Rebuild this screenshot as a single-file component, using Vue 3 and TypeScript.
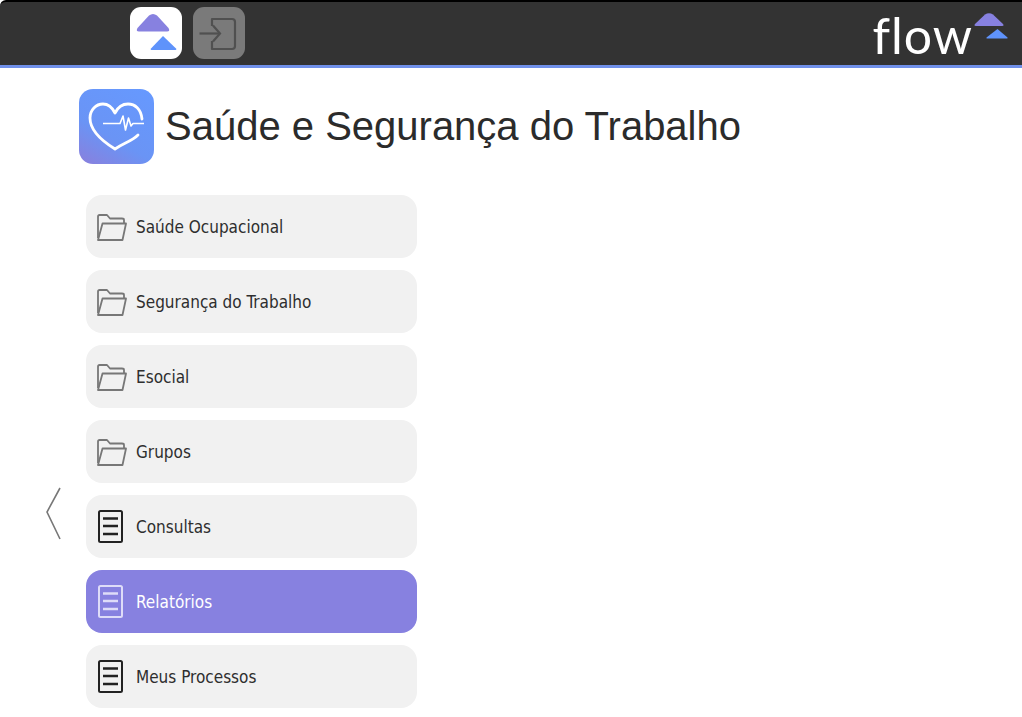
<template>
  <div class="page">
    <header class="topbar">
      <div class="tiles">
        <button class="tile tile-home">
          <svg width="52" height="52" viewBox="0 0 52 52">
            <path d="M7.5 21 L19 8.5 Q23 5.5 27 8.5 L38.5 21 Q40.5 24.5 37 24.5 L9 24.5 Q5.5 24.5 7.5 21 Z" fill="#8781e0" />
            <path d="M33 29 L46 41.5 Q47 43 45.5 43 L21.5 43 Q20 43 21 41.5 Z" fill="#5f93fb" />
          </svg>
        </button>
        <button class="tile tile-exit">
          <svg width="52" height="52" viewBox="0 0 52 52" fill="none" stroke="#505050" stroke-width="2.2">
            <path d="M19 19 V12 H39 Q42 12 42 15 V39 Q42 42 39 42 H19 V34" stroke-linejoin="round" />
            <path d="M6.5 26.5 H26" />
            <path d="M20 18.5 L27 26.5 L20 34.5" />
          </svg>
        </button>
      </div>
      <div class="brand">
        <span class="brand-name">flow</span>
        <svg class="brand-mark" width="34" height="26" viewBox="0 0 34 26">
          <path d="M1 11 L11 1.5 Q15 -1 19 1.5 L29 11 Q30.5 13 28 13 L2 13 Q-0.5 13 1 11 Z" fill="#8781e0" />
          <path d="M23.5 16 L33.5 24.5 Q34 25.5 33 25.5 L13 25.5 Q12 25.5 12.5 24.5 Z" fill="#5f93fb" />
        </svg>
      </div>
    </header>

    <section class="heading">
      <div class="heading-icon">
        <svg width="75" height="75" viewBox="0 0 75 75" fill="none" stroke="#fff" stroke-width="2.8">
          <path d="M59 46 C53 52 45 54 36 60 C23 52 11 42 11 29 C11 21 17 15 24 15 C29 15 33 18 36 24 C39 18 44 15 49 15 C56 15 62 20 63 30" stroke-linecap="round" stroke-linejoin="round" />
          <path d="M24 34.5 H41 L44 27 L46.5 41 L49.5 29 L52 37 L54 34.5 H65" stroke-width="1.6" stroke-linejoin="round" />
        </svg>
      </div>
      <h1 class="title">Saúde e Segurança do Trabalho</h1>
    </section>

    <div class="content">
      <div class="back">
        <svg width="16" height="54" viewBox="0 0 16 54" fill="none" stroke="#777" stroke-width="1.6">
          <path d="M15 1 L2 25 L15 52" />
        </svg>
      </div>
      <nav class="menu">
        <a
          v-for="item in items"
          :key="item.label"
          class="menu-item"
          :class="{ active: item.active }"
        >
          <svg v-if="item.kind === 'folder'" class="menu-icon" width="32" height="30" viewBox="0 0 32 30" fill="none" stroke="#777" stroke-width="1.8">
            <path d="M2 26 V4.5 Q2 3 3.5 3 H11 L14 6.5 H26 Q28 6.5 28 8 V11" stroke-linejoin="round" />
            <path d="M2 28 L6.5 11.5 H30 L26.5 28 Z" stroke-linejoin="round" />
          </svg>
          <svg v-else class="menu-icon" width="32" height="34" viewBox="0 0 32 34" fill="none" :stroke="item.active ? '#dedcf8' : '#222'">
            <rect x="3" y="1" width="23" height="31" rx="1.5" stroke-width="2" />
            <path d="M7 8.5 H22 M7 16 H22 M7 24 H22" stroke-width="2.6" />
          </svg>
          <span class="menu-label">{{ item.label }}</span>
        </a>
      </nav>
    </div>
  </div>
</template>

<script setup lang="ts">
interface MenuItem {
  label: string
  kind: 'folder' | 'doc'
  active?: boolean
}

const items: MenuItem[] = [
  { label: 'Saúde Ocupacional', kind: 'folder' },
  { label: 'Segurança do Trabalho', kind: 'folder' },
  { label: 'Esocial', kind: 'folder' },
  { label: 'Grupos', kind: 'folder' },
  { label: 'Consultas', kind: 'doc' },
  { label: 'Relatórios', kind: 'doc', active: true },
  { label: 'Meus Processos', kind: 'doc' }
]
</script>

<style scoped>
.page {
  height: 717px;
  overflow: hidden;
  background: #fff;
  font-family: "DejaVu Sans", "Liberation Sans", sans-serif;
}

.topbar {
  box-sizing: border-box;
  height: 68px;
  display: flex;
  justify-content: space-between;
  background: #333;
  border-top: 2px solid #000;
  border-bottom: 3px solid #7090ea;
  border-top-left-radius: 6px;
}

.tiles {
  display: flex;
  gap: 11px;
  padding: 5px 0 0 130px;
}

.tile {
  width: 52px;
  height: 52px;
  padding: 0;
  border: none;
  border-radius: 11px;
}

.tile-home {
  background: #fff;
}

.tile-exit {
  background: #7a7a7a;
}

.brand {
  display: flex;
  align-items: flex-start;
  padding-right: 14px;
}

.brand-name {
  font-family: Lato, sans-serif;
  font-weight: 400;
  font-size: 50px;
  letter-spacing: 1px;
  line-height: 52px;
  color: #fff;
  margin-top: 7px;
}

.brand-mark {
  margin: 11px 0 0 1px;
}

.heading {
  display: flex;
  align-items: center;
  gap: 11px;
  padding: 21px 0 0 79px;
}

.heading-icon {
  width: 75px;
  height: 75px;
  border-radius: 14px;
  background: linear-gradient(30deg, #8a7fdc 0%, #6a94f5 38%, #6699ff 100%);
}

.title {
  margin: 0;
  font-family: "Liberation Sans", Arial, sans-serif;
  font-weight: 400;
  font-size: 40px;
  color: #2b2b2b;
}

.content {
  display: flex;
  padding-top: 31px;
}

.back {
  width: 86px;
  box-sizing: border-box;
  padding: 292px 0 0 45px;
}

.menu {
  display: flex;
  flex-direction: column;
  gap: 12px;
  width: 331px;
}

.menu-item {
  height: 63px;
  display: flex;
  align-items: center;
  gap: 8px;
  padding-left: 10px;
  border-radius: 16px;
  background: #f1f1f1;
  color: #2e2e2e;
}

.menu-item.active {
  background: #8781e0;
  color: #fff;
}

.menu-icon {
  flex: none;
}

.menu-label {
  font-size: 17px;
  font-stretch: condensed;
}
</style>
